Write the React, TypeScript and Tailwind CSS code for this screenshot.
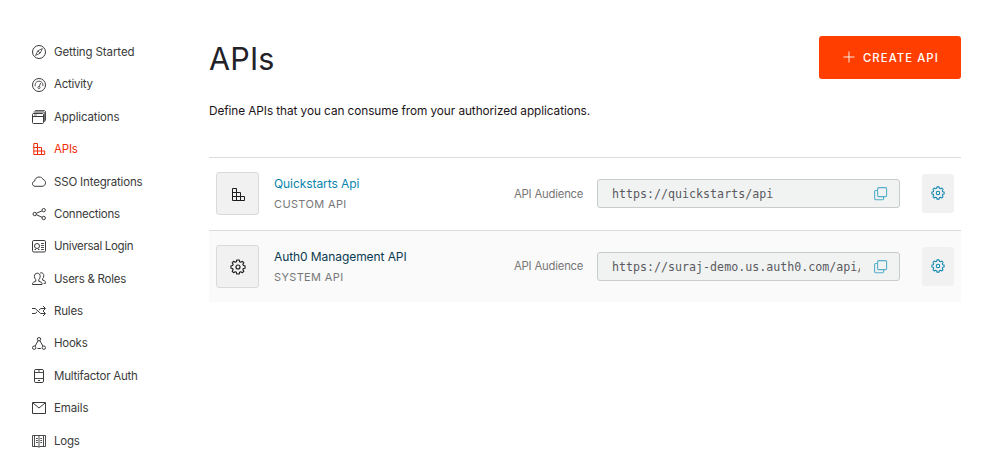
import type { ReactNode } from 'react';

const gearPath =
  'M6.8 1h2.4l.4 1.700 1.200.500 1.600-.9 1.400 1.400-.9 1.600.5 1.200 1.600.3v2.400l-1.600.3-.5 1.200.9 1.600-1.400 1.400-1.600-.9-1.200.5-.4 1.700H6.800l-.4-1.700-1.200-.5-1.600.9-1.400-1.400.9-1.600-.5-1.200L1 9.200V6.800l1.600-.3.500-1.200-.9-1.600 1.400-1.400 1.600.9 1.200-.5z';

function Gear({ className }: { className: string }) {
  return (
    <svg viewBox="0 0 16 16" fill="none" stroke="currentColor" strokeWidth="1.15" strokeLinejoin="round" className={className}>
      <path d={gearPath} />
      <circle cx="8" cy="8" r="2" />
    </svg>
  );
}

function Blocks({ className }: { className: string }) {
  return (
    <svg viewBox="0 0 14 14" fill="none" stroke="currentColor" className={className}>
      <path d="M1.500 1.500h4v4h4v4h4v4h-12zM1.500 5.500h4v8M1.500 9.500h8v4" />
    </svg>
  );
}

function Copy() {
  return (
    <svg viewBox="0 0 14 14" fill="none" stroke="currentColor" strokeWidth="1.1" className="block size-[14px] text-[#55aecb]">
      <rect x="3.600" y=".6" width="9" height="9" rx="1.200" />
      <path d="M3.500 3.500H1.700C1 3.500.6 3.900.6 4.600v7c0 .7.4 1.100 1.100 1.100h6.800c.7 0 1.100-.4 1.100-1.100V9.800" />
    </svg>
  );
}

const nav: { label: string; tracking: string; active?: boolean; icon: ReactNode }[] = [
  {
    label: 'Getting Started',
    tracking: 'tracking-[-0.1px]',
    icon: (
      <>
        <circle cx="7" cy="7" r="6.5" />
        <path d="M10.400 3.600 8.200 8.200 3.600 10.400l2.200-4.600zM5.900 5.900l2.200 2.200" strokeWidth=".8" />
      </>
    ),
  },
  {
    label: 'Activity',
    tracking: 'tracking-[-0.25px]',
    icon: (
      <>
        <circle cx="7" cy="7" r="6.5" />
        <path d="M3.300 8.200C2.500 5.300 4.500 3.200 7 3.200s4.500 2.100 3.700 5M8.600 5 7.400 8.200" strokeWidth=".9" />
        <circle cx="7" cy="9.500" r="1.100" strokeWidth=".8" />
      </>
    ),
  },
  {
    label: 'Applications',
    tracking: 'tracking-[-0.13px]',
    icon: (
      <>
        <path d="M.5 4.500c0-.7.4-1 1-1h9c.7 0 1 .3 1 1v8c0 .7-.3 1-1 1h-9c-.6 0-1-.3-1-1zM.5 6.500h11" />
        <path d="M1.500 2h9.800c1 0 1.400.5 1.400 1.400v8.600M3 .6h9c1 0 1.500.5 1.500 1.400v8.500" strokeWidth=".9" />
        <path d="M2 5h2.800" strokeWidth=".7" />
      </>
    ),
  },
  {
    label: 'APIs',
    tracking: 'tracking-[-0.2px]',
    active: true,
    icon: <path d="M1.800 1.500h3.700v4h4v3.500h3.200v3.500H1.800zM1.800 5.500h3.700v7M1.800 9h7.700v3.500" />,
  },
  {
    label: 'SSO Integrations',
    tracking: 'tracking-[-0.17px]',
    icon: <path d="M3.100 11.300C1.500 11.300.5 10.200.5 8.700c0-1.300.8-2.300 2.100-2.600C2.900 3.700 4.800 2 7.100 2c1.900 0 3.300.9 4 2.500 1.500.4 2.400 1.600 2.400 3.200 0 2.100-1.400 3.600-3.400 3.600z" />,
  },
  {
    label: 'Connections',
    tracking: 'tracking-[-0.23px]',
    icon: (
      <>
        <circle cx="2.700" cy="7" r="1.700" />
        <circle cx="11.700" cy="3.200" r="1.700" />
        <circle cx="11.700" cy="11" r="1.700" />
        <path d="m4.300 6.300 5.800-2.500M4.300 7.700l5.800 2.600" />
      </>
    ),
  },
  {
    label: 'Universal Login',
    tracking: 'tracking-[-0.32px]',
    icon: (
      <>
        <rect x=".5" y="1.500" width="13" height="11.500" rx="1.300" />
        <circle cx="5" cy="7" r="2.500" />
        <path d="M2.500 10.500h1.500M6 10.500h1.500M9 4.500h3M9 6.500h3M9 8.500h3M9 10.500h3" strokeWidth=".9" />
      </>
    ),
  },
  {
    label: 'Users & Roles',
    tracking: 'tracking-[-0.25px]',
    icon: (
      <>
        <path d="M5.300 1.200c1.800 0 2.900 1.300 2.900 3.100 0 1.400-.6 2.700-1.400 3.400v1.600l2.300.9c.6.300 1 .9 1 1.600v.7H.5v-.7c0-.7.4-1.300 1-1.600l2.300-.9V7.700C3 7 2.400 5.700 2.400 4.300c0-1.800 1.100-3.100 2.900-3.100z" />
        <path d="M8 1.300c.3-.3.8-.5 1.300-.5 1.500 0 2.500 1.200 2.500 2.800 0 1.300-.5 2.500-1.200 3.100v1.400l1.900.7c.6.300 1 .9 1 1.500v1h-1.900" />
      </>
    ),
  },
  {
    label: 'Rules',
    tracking: 'tracking-[-0.2px]',
    icon: <path d="M0 4.500h3.200L8.700 9.500H13M0 9.500h3.200l1.900-1.700M6.900 6.200l1.900-1.700H13M11 2l2.500 2.500L11 7M11 7l2.500 2.500L11 12" />,
  },
  {
    label: 'Hooks',
    tracking: 'tracking-[-0.25px]',
    icon: (
      <>
        <circle cx="7" cy="2.200" r="1.700" />
        <circle cx="2.200" cy="10.700" r="1.700" />
        <circle cx="11.800" cy="10.700" r="1.700" />
        <path d="m6.100 3.700-3 5.400M7.900 3.700l3 5.400M5.500 11.500h3.300" />
      </>
    ),
  },
  {
    label: 'Multifactor Auth',
    tracking: 'tracking-[-0.22px]',
    icon: (
      <>
        <rect x="2.500" y=".5" width="9" height="13" rx="1.300" />
        <path d="M2.500 3.500h9M2.500 9.500h9M6 2h2" strokeWidth=".9" />
        <path d="M6 11.500h2" strokeWidth="1.200" />
      </>
    ),
  },
  {
    label: 'Emails',
    tracking: 'tracking-[-0.12px]',
    icon: <path d="M.5 1.500h13v11H.5zM1 2l6 5 6-5" />,
  },
  {
    label: 'Logs',
    tracking: 'tracking-[-0.25px]',
    icon: (
      <>
        <path d="M7 1.500H.5v11H6l1 .9 1-.9h5.500v-11zM7 1.500v11.500M2.500 1.500v11M11.500 1.500v11" strokeWidth=".9" />
        <path d="M4 4.500h1.800M4 6.500h1.800M4 8.500h1.800M8.300 4.500h1.800M8.300 6.500h1.800M8.300 8.500h1.800" strokeWidth=".9" />
      </>
    ),
  },
];

const apis = [
  { name: 'Quickstarts Api', kind: 'CUSTOM API', url: 'https://quickstarts/api', system: false },
  { name: 'Auth0 Management API', kind: 'SYSTEM API', url: 'https://suraj-demo.us.auth0.com/api/v2/', system: true },
];

export default function App() {
  return (
    <div className="flex h-[459px] w-[1004px] overflow-hidden bg-white font-['Inter',sans-serif] text-[11.5px] text-[#333]">
      <nav className="w-[209px] shrink-0 pl-8 pt-[36px]">
        <ul>
          {nav.map((item) => (
            <li
              key={item.label}
              className={`flex h-[32.38px] items-center gap-2 whitespace-nowrap ${item.tracking} ${item.active ? 'text-[#f02b05]' : 'text-[#3a3a3a]'}`}
            >
              <svg viewBox="0 0 14 14" fill="none" stroke="currentColor" strokeLinejoin="round" className="size-[14px] shrink-0 overflow-visible">
                {item.icon}
              </svg>
              <a className="pt-px">{item.label}</a>
            </li>
          ))}
        </ul>
      </nav>

      <main className="w-[752px] shrink-0 pt-9">
        <header className="flex h-[43px] items-center justify-between">
          <h1 className="pt-[2px] text-[30.5px] leading-[43px] tracking-[0.2px] text-[#222228]">APIs</h1>
          <button className="flex h-[43px] w-[142px] items-center rounded-[3px] bg-[#ff3e00] pl-6 text-[11.3px] font-medium tracking-[1.08px] text-white">
            <svg viewBox="0 0 12 12" fill="none" stroke="currentColor" strokeWidth=".9" className="mb-px mr-2 size-3">
              <path d="M6 .5v11M.5 6h11" />
            </svg>
            <span className="pt-px">CREATE API</span>
          </button>
        </header>

        <p className="mt-6 h-4 whitespace-nowrap text-[11.8px] leading-4 tracking-[-0.07px] text-[#1c1418]">
          Define APIs that you can consume from your authorized applications.
        </p>

        <section className="mt-[38px]">
          {apis.map((api) => (
            <article
              key={api.name}
              className={`flex items-start border-t border-[#dcdcdc] pl-[7px] pr-[7px] ${api.system ? 'h-[72px] bg-[#fafafa]' : 'h-[73px]'}`}
            >
              <div className="mt-[14px] flex size-[43px] shrink-0 items-start rounded-[3px] border border-[#dadada] bg-[#f1f1f1] pl-[13px] text-[#1c1c1c]">
                {api.system ? <Gear className="mt-[13px] size-4" /> : <Blocks className="ml-px mt-[14px] size-[14px]" />}
              </div>
              <div className="ml-[15px] mt-[18px] w-[240px] whitespace-nowrap">
                <h2 className={`text-[12px] leading-4 tracking-[-0.08px] ${api.system ? 'text-[#0a3a52]' : 'text-[#0a84ae]'}`}>{api.name}</h2>
                <p className="mt-1 text-[11px] leading-4 tracking-[0.36px] text-[#777]">{api.kind}</p>
              </div>
              <span className={`w-[83px] whitespace-nowrap text-[11.3px] leading-4 tracking-[-0.2px] text-[#777] ${api.system ? 'mt-[27px]' : 'mt-[28px]'}`}>
                API Audience
              </span>
              <div className="mt-[21px] flex h-[29px] w-[303px] items-start rounded-[3px] border border-[#c9cccc] bg-[#f1f3f3] pl-[14px]">
                <span className="mt-[6px] w-[248px] shrink-0 overflow-hidden whitespace-nowrap font-['DejaVu_Sans_Mono',monospace] text-[11.65px] leading-4 text-[#5a5a60]">
                  {api.url}
                </span>
                <span className="ml-[14px] mt-[7px] shrink-0">
                  <Copy />
                </span>
              </div>
              <button className="ml-auto mt-4 flex h-[39px] w-8 items-start justify-center rounded-[3px] bg-[#f1f1f1] pt-3 text-[#0a84ae]">
                <Gear className="size-[14px]" />
              </button>
            </article>
          ))}
        </section>
      </main>
    </div>
  );
}
